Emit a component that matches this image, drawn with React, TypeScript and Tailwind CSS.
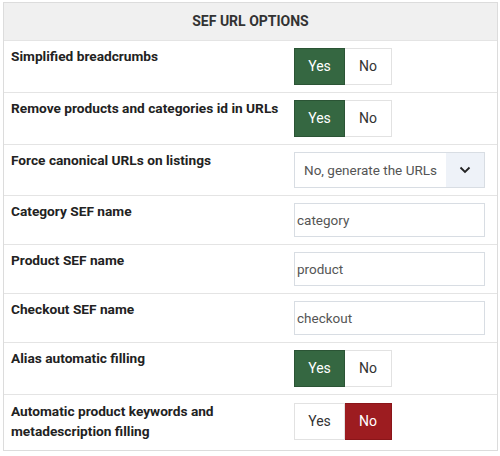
import { useState } from "react";

type Row =
  | { label: string; kind: "toggle"; value: boolean }
  | { label: string; kind: "select"; value: string }
  | { label: string; kind: "text"; value: string };

const ROWS: Row[] = [
  { label: "Simplified breadcrumbs", kind: "toggle", value: true },
  { label: "Remove products and categories id in URLs", kind: "toggle", value: true },
  { label: "Force canonical URLs on listings", kind: "select", value: "No, generate the URLs" },
  { label: "Category SEF name", kind: "text", value: "category" },
  { label: "Product SEF name", kind: "text", value: "product" },
  { label: "Checkout SEF name", kind: "text", value: "checkout" },
  { label: "Alias automatic filling", kind: "toggle", value: true },
  { label: "Automatic product keywords and metadescription filling", kind: "toggle", value: false },
];

export default function App() {
  return (
    <div className="bg-white w-[500px] h-[456px] pt-[2px] pl-[3px] font-['Roboto','Liberation_Sans',sans-serif]">
      <div className="w-[495px] border border-[#dcdcdc]">
        {/* Header */}
        <div className="h-[38px] bg-[#f0f0f0] border-b border-[#e4e4e4] flex items-center justify-center text-[14px] font-bold text-[#333] uppercase">
          SEF URL Options
        </div>

        {ROWS.map((row, i) => (
          <OptionRow key={row.label} row={row} last={i === ROWS.length - 1} />
        ))}
      </div>
    </div>
  );
}

function OptionRow({ row, last }: { row: Row; last: boolean }) {
  return (
    <div className={`flex ${last ? "pt-[8px] pb-[9px]" : "py-[7px] border-b border-[#e4e4e4]"}`}>
      <div className="w-[290px] shrink-0 pl-[7px] pr-[4px] -mt-[2px] text-[13.7px] font-bold text-[#222] leading-[20px]">
        {row.label}
      </div>
      <div className="flex-1 flex items-start">
        {row.kind === "toggle" && <YesNo initial={row.value} />}
        {row.kind === "text" && <TextBox value={row.value} />}
        {row.kind === "select" && <SelectBox value={row.value} />}
      </div>
    </div>
  );
}

function TextBox({ value }: { value: string }) {
  return (
    <div className="w-[191px] h-[34px] border border-[#d8dde3] pl-[2px] flex items-center text-[13.5px] text-[#555]">
      {value}
    </div>
  );
}

function YesNo({ initial }: { initial: boolean }) {
  const [on, setOn] = useState(initial);
  return (
    <div className="flex h-[37px] text-[14px]">
      <button
        onClick={() => setOn(true)}
        className={`w-[51px] border ${
          on ? "bg-[#356741] border-[#2b5435] text-white" : "bg-white border-[#e2e2e2] text-[#333]"
        }`}
      >
        Yes
      </button>
      <button
        onClick={() => setOn(false)}
        className={`w-[47px] border border-l-0 ${
          on ? "bg-white border-[#e2e2e2] text-[#333]" : "bg-[#9d1c20] border-[#8a1519] text-white"
        }`}
      >
        No
      </button>
    </div>
  );
}

function SelectBox({ value }: { value: string }) {
  return (
    <div className="flex w-[191px] h-[36px] border border-[#d8dde3] text-[13.5px] text-[#555]">
      <div className="flex-1 flex items-center pl-[9px] whitespace-nowrap">{value}</div>
      <div className="w-[38px] bg-[#eef2f8] flex items-center justify-center">
        <svg width="12" height="8" viewBox="0 0 12 8" fill="none">
          <path d="M1.5 1.5 6 6l4.5-4.5" stroke="#222" strokeWidth="1.8" />
        </svg>
      </div>
    </div>
  );
}
